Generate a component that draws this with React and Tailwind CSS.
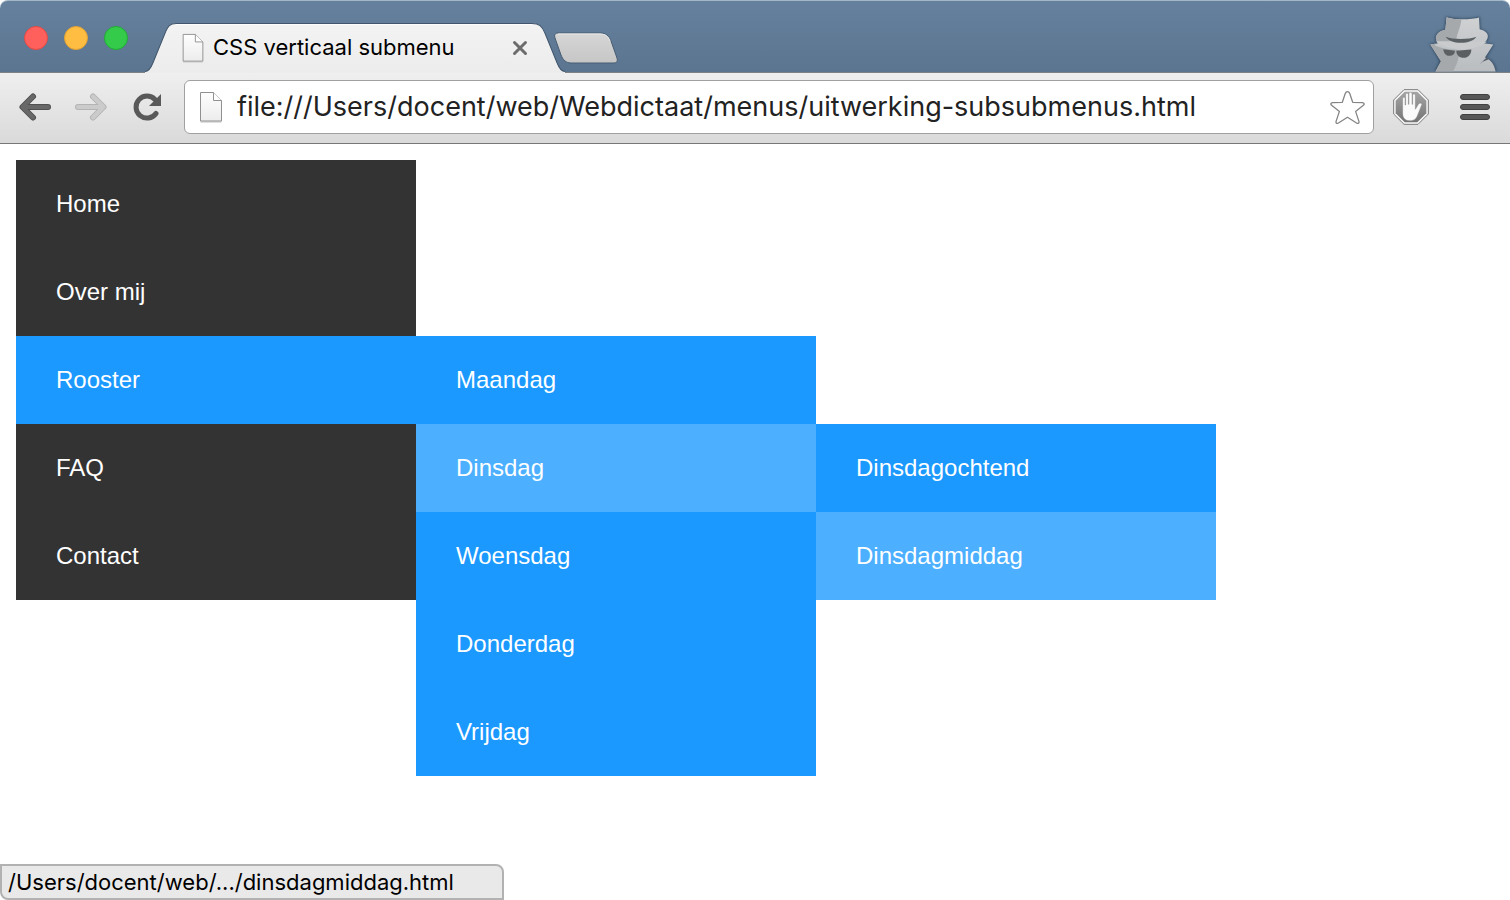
const menu = [
  { label: 'Home' },
  { label: 'Over mij' },
  {
    label: 'Rooster',
    active: true,
    items: [
      { label: 'Maandag' },
      {
        label: 'Dinsdag',
        active: true,
        items: [{ label: 'Dinsdagochtend' }, { label: 'Dinsdagmiddag', active: true }],
      },
      { label: 'Woensdag' },
      { label: 'Donderdag' },
      { label: 'Vrijdag' },
    ],
  },
  { label: 'FAQ' },
  { label: 'Contact' },
];

function itemColor(level, active) {
  if (level === 0) return active ? 'bg-[#1b99ff]' : 'bg-[#333333]';
  return active ? 'bg-[#4cafff]' : 'bg-[#1b99ff]';
}

function Menu({ items, level = 0 }) {
  return (
    <ul className={level === 0 ? 'w-100' : 'absolute top-0 left-full w-100'}>
      {items.map((item) => (
        <li key={item.label} className="relative">
          <a
            href={'#' + item.label.toLowerCase().replace(' ', '-')}
            className={'flex h-22 items-center px-10 text-2xl text-white ' + itemColor(level, item.active)}
          >
            {item.label}
          </a>
          {item.items && <Menu items={item.items} level={level + 1} />}
        </li>
      ))}
    </ul>
  );
}

function PageIcon({ className }) {
  return (
    <svg viewBox="0 0 24 32" className={className} aria-hidden="true">
      <defs>
        <linearGradient id="paper" x1="0" y1="0" x2="0" y2="1">
          <stop offset="0" stopColor="#fefefe" />
          <stop offset="1" stopColor="#ececec" />
        </linearGradient>
      </defs>
      <path d="M1.5 31H22.5" stroke="#d5d5d5" strokeWidth="1.5" />
      <path d="M1.5 1.5H14.5L22.5 9.5V30H1.5Z" fill="url(#paper)" stroke="#909090" />
      <path d="M14.5 1.5V9.5H22.5" fill="#fff" stroke="#909090" />
    </svg>
  );
}

function TabShape() {
  return (
    <svg viewBox="0 0 420 50" className="absolute inset-0 h-full w-full" preserveAspectRatio="none" aria-hidden="true">
      <defs>
        <linearGradient id="tab" x1="0" y1="0" x2="0" y2="1">
          <stop offset="0" stopColor="#f3f3f3" />
          <stop offset="1" stopColor="#ececec" />
        </linearGradient>
      </defs>
      <path
        d="M0 50V48.5C4 48.500 6 45 8 40L20 11C23 4 25 1.500 31 1.500H387C394 1.500 397 4 400 11L412 40C414 45 416 48.500 420 48.500V50Z"
        fill="url(#tab)"
      />
      <path
        d="M0 48.500C4 48.500 6 45 8 40L20 11C23 4 25 1.500 31 1.500H387C394 1.500 397 4 400 11L412 40C414 45 416 48.500 420 48.500"
        fill="none"
        stroke="#41566c"
      />
      <path d="M31 2.500H387" stroke="#fcfcfc" />
    </svg>
  );
}

function IncognitoIcon() {
  return (
    <svg viewBox="138 40 222 176" className="h-[59px] w-[74px] overflow-visible" aria-hidden="true">
      <defs>
        <clipPath id="left-side">
          <path d="M138 40H245C246 72 236 90 231 108L228 124H166V138C192 148 211 149 236 151C240 170 231 195 218 216H138Z" />
        </clipPath>
        <clipPath id="strip">
          <rect x="120" y="20" width="260" height="196" />
        </clipPath>
        <linearGradient id="coat" x1="0" y1="0" x2="0" y2="1">
          <stop offset="0" stopColor="#cfd1d3" />
          <stop offset="1" stopColor="#babdc0" />
        </linearGradient>
        <filter id="shade" x="-20%" y="-20%" width="140%" height="140%">
          <feGaussianBlur stdDeviation="4" />
        </filter>
      </defs>
      <g clipPath="url(#strip)">
        <path
          filter="url(#shade)"
          fill="#34495e"
          d="M198 50C218 58 276 59 299 51L301 88C321 93 330 105 324 119Q321 127 311 130L342 133L318 174C338 180 346 195 350 216H164L179 184L149 132L171 130C160 119 163 95 194 89Z"
        />
        <path
          fill="url(#coat)"
          d="M200 52C220 61 276 60 297 53L299 88C319 93 328 104 322 117Q320 125 310 130L340 134L315 173C334 180 343 194 347 216H166L183 184L151 134L174 130C162 118 166 96 196 90Z"
        />
        <path
          clipPath="url(#left-side)"
          fill="#a6a9ac"
          d="M200 52C220 61 276 60 297 53L299 88C319 93 328 104 322 117Q320 125 310 130L340 134L315 173C334 180 343 194 347 216H166L183 184L151 134L174 130C162 118 166 96 196 90Z"
        />
        <path d="M168 126H321L309 134C270 155 208 153 168 126Z" fill="#c9cbcd" />
        <path d="M197 111C220 120 266 120 289 111C281 124 263 129 243 129C222 129 205 123 197 111Z" fill="#5b6064" />
        <path d="M190 148L225 153C224 163 219 168 209 168C197 168 191 160 190 148Z" fill="#5b5f62" />
        <path d="M229 153L274 149C274 164 264 174 251 174C237 174 229 166 229 153Z" fill="#5b5f62" />
        <path d="M298 194L322 171L325 179L308 186Z" fill="#56616c" />
      </g>
    </svg>
  );
}

function AdblockIcon() {
  return (
    <svg viewBox="0 0 108 108" className="size-9" aria-hidden="true">
      <defs>
        <linearGradient id="sign" x1="0" y1="0" x2="0" y2="1">
          <stop offset="0" stopColor="#a6a6a6" />
          <stop offset="1" stopColor="#747474" />
        </linearGradient>
      </defs>
      <path d="M33 2H75L106 33V75L75 106H33L2 75V33Z" fill="#f7f7f7" stroke="#7c7c7c" strokeWidth="3" />
      <path d="M35 8H73L100 35V73L73 100H35L8 73V35Z" fill="url(#sign)" />
      <path
        d="M29 60V29C29 23 36 23 36 29V48H38V18C38 11 46 11 46 18V46H48V15C48 8 57 8 57 15V46H59V20C59 13 67 13 67 20V61C72 55 74 46 80 43C86 41 88 45 85 50L73 80C69 91 61 95 50 95C36 95 30 87 29 75Z"
        fill="#fafafa"
        stroke="#777"
        strokeWidth="1"
      />
    </svg>
  );
}

export default function App() {
  return (
    <div className="relative flex min-h-screen flex-col bg-white font-['Liberation_Sans',Arial,sans-serif]">
      <header className="font-[Inter,sans-serif]">
        <div className="flex h-[73px] items-end rounded-t-[8px] border-t border-b border-t-[#a4b7c6] border-b-[#7d8287] bg-linear-to-b from-[#66819d] to-[#5b7591]">
          <div className="flex shrink-0 gap-4 self-start pt-[25px] pl-6">
            <button aria-label="Sluiten" className="size-6 rounded-full border border-[#e04a45] bg-[#ff605b]" />
            <button aria-label="Minimaliseren" className="size-6 rounded-full border border-[#dfa033] bg-[#ffbd41]" />
            <button aria-label="Vergroten" className="size-6 rounded-full border border-[#20ab35] bg-[#33cb49]" />
          </div>
          <div className="relative -mb-px ml-[17px] flex h-[51px] w-[420px] shrink-0 items-center px-9">
            <TabShape />
            <PageIcon className="relative h-[30px] w-6 shrink-0" />
            <span className="relative ml-2 grow text-[22px] whitespace-nowrap text-black">CSS verticaal submenu</span>
            <button aria-label="Tabblad sluiten" className="relative p-px">
              <svg viewBox="0 0 16 16" className="size-4">
                <path d="M2.500 2.500L13.500 13.500M13.500 2.500L2.500 13.500" stroke="#6c6c6c" strokeWidth="3" strokeLinecap="round" />
              </svg>
            </button>
          </div>
          <button aria-label="Nieuw tabblad" className="-ml-3 shrink-0 pb-2">
            <svg viewBox="0 0 66 32" className="h-8 w-[66px]">
              <defs>
                <linearGradient id="plus-tab" x1="0" y1="0" x2="0" y2="1">
                  <stop offset="0" stopColor="#d6d6d6" />
                  <stop offset="1" stopColor="#c6c6c6" />
                </linearGradient>
              </defs>
              <path
                d="M5 1H47C53 1 56 4 58 9L64 26C65 29 64 31 61 31H18C13 31 10 28 8 23L2 6C1 3 2 1 5 1Z"
                fill="url(#plus-tab)"
                stroke="#465c73"
              />
              <path d="M5 2H47C52 2 55 4 57 9" fill="none" stroke="#e8e8e8" />
            </svg>
          </button>
          <div className="mr-2.5 ml-auto">
            <IncognitoIcon />
          </div>
        </div>

        <div className="flex h-[71px] items-center border-b border-[#777777] bg-linear-to-b from-[#efefef] to-[#dadada] pb-0.5">
          <button aria-label="Terug" className="ml-[18px] shrink-0">
            <svg viewBox="0 0 34 30" className="h-[30px] w-[34px]">
              <path d="M15 4.500L4.500 15L15 25.500M5 15H30" fill="none" stroke="#505050" strokeWidth="6" strokeLinecap="round" strokeLinejoin="round" />
              <path d="M15 4.500L4.500 15L15 25.500M5 15H30" fill="none" stroke="#686868" strokeWidth="4" strokeLinecap="round" strokeLinejoin="round" />
            </svg>
          </button>
          <button aria-label="Vooruit" className="ml-[22px] shrink-0">
            <svg viewBox="0 0 34 30" className="h-[30px] w-[34px]">
              <path d="M19 4.500L29.500 15L19 25.500M29 15H4" fill="none" stroke="#b4b4b4" strokeWidth="6" strokeLinecap="round" strokeLinejoin="round" />
              <path d="M19 4.500L29.500 15L19 25.500M29 15H4" fill="none" stroke="#cbcbcb" strokeWidth="4" strokeLinecap="round" strokeLinejoin="round" />
            </svg>
          </button>
          <button aria-label="Vernieuwen" className="ml-[25px] shrink-0">
            <svg viewBox="0 0 30 30" className="size-[30px]">
              <path d="M23 21.500A11 11 0 1 1 22 7.500" fill="none" stroke="#595959" strokeWidth="5" strokeLinecap="round" />
              <path d="M28 2V14H16Z" fill="#595959" />
            </svg>
          </button>
          <div className="ml-[21px] flex h-[54px] grow items-center rounded-md border border-[#a0a0a0] bg-white pr-2 pl-[14px]">
            <PageIcon className="h-8 w-6 shrink-0" />
            <input
              type="text"
              aria-label="Adres"
              defaultValue="file:///Users/docent/web/Webdictaat/menus/uitwerking-subsubmenus.html"
              className="ml-[14px] min-w-0 grow bg-transparent text-[27px] text-[#222222] outline-none"
            />
            <button aria-label="Bladwijzer maken" className="shrink-0">
              <svg viewBox="0 0 108 108" className="size-[35px]">
                <path
                  d="M54 5C57 5 59 6 61 11L70 38L100 39C106 40 107 44 103 47L79 66L89 96C91 102 87 105 82 102L54 84L26 102C21 105 17 102 19 96L29 66L5 47C1 44 2 40 8 39L38 38L47 11C49 6 51 5 54 5Z"
                  fill="#fff"
                  stroke="#858585"
                  strokeWidth="4"
                  strokeLinejoin="round"
                />
              </svg>
            </button>
          </div>
          <button aria-label="Advertentieblokkering" className="ml-[19px] shrink-0">
            <AdblockIcon />
          </button>
          <button aria-label="Menu" className="mr-5 ml-[31px] flex shrink-0 flex-col gap-1">
            <span className="h-1.5 w-[30px] rounded-full border border-[#404040] bg-[#575757]" />
            <span className="h-1.5 w-[30px] rounded-full border border-[#404040] bg-[#575757]" />
            <span className="h-1.5 w-[30px] rounded-full border border-[#404040] bg-[#575757]" />
          </button>
        </div>
      </header>

      <main className="p-4">
        <nav aria-label="Hoofdmenu">
          <Menu items={menu} />
        </nav>
      </main>

      <div className="absolute bottom-0 left-0 flex h-9 w-126 items-center rounded-tr-lg rounded-bl-lg border-2 border-[#b2b2b2] bg-[#e9e9e9] px-1.5 font-[Inter,sans-serif] text-[22px] text-black">
        /Users/docent/web/.../dinsdagmiddag.html
      </div>
    </div>
  );
}
